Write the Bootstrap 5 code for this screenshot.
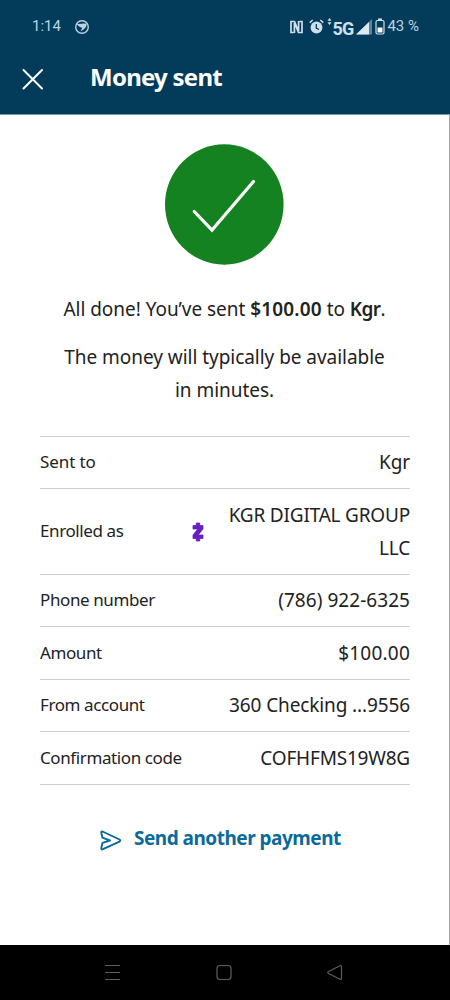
<!DOCTYPE html>
<html lang="en">
<head>
<meta charset="utf-8">
<meta name="viewport" content="width=device-width, initial-scale=1">
<title>Money sent</title>
<link href="https://cdn.jsdelivr.net/npm/bootstrap@5.3.0/dist/css/bootstrap.min.css" rel="stylesheet">
<style>
body{font-family:"Noto Sans","Open Sans",sans-serif;color:#222;background:#fff;font-size:19px}
.screen{height:1000px}
.topbar{height:115px;background:#033c5a;border-bottom:1px solid #7d97a5}
.status{height:53px;font:15px/53px Roboto,sans-serif;color:#b9d3e2;padding-left:32px;padding-right:31px}
.brand-dot{margin-left:13px}
.net{font-size:18px;font-weight:700;letter-spacing:-.8px;color:#cfe0ea;padding-top:3px}
.arrows{margin:-9px 0 0 3px}
.alarm{margin-left:6px}
.page{border-right:1px solid #a5a5a5}
.title-row{height:50px;padding-left:22px}
.title-row h1{font-size:24px;font-weight:700;line-height:48px;letter-spacing:-.75px;margin:0 0 0 46px}
.close-x{margin-top:15px}
.done{margin-top:29px;height:121px}
.msg{line-height:33px;letter-spacing:-.04px}
.msg b{letter-spacing:.15px;font-weight:600}
.msg .who{letter-spacing:-.6px}
.details{margin:29.4px 39px 0 40px;border-top:1px solid #cfcfcf}
.detail{border-bottom:1px solid #cfcfcf;padding:9.2px 0 9.3px}
.detail dt{font-weight:400;font-size:17px;line-height:32px;padding-bottom:1px;letter-spacing:-.4px}
.detail:first-child dt{letter-spacing:-.1px}
.detail dd{margin:0;line-height:33px;text-align:right;letter-spacing:-.12px}
.detail .caps{letter-spacing:-.2px}
.detail .money{letter-spacing:.22px}
.detail .phone{letter-spacing:.05px}
.zmark{margin-right:25px}
.again{color:#0b6a9b;font-weight:700;text-decoration:none;line-height:33px;margin:36.6px 0 0 99px;letter-spacing:-.5px}
.navkeys{height:55px;background:#000}
</style>
<script src="https://cdn.jsdelivr.net/npm/bootstrap@5.3.0/dist/js/bootstrap.bundle.min.js"></script>
</head>
<body>
<div class="screen d-flex flex-column overflow-hidden">
<header class="topbar flex-shrink-0 text-white">
  <div class="status d-flex align-items-center">
    <span>1:14</span>
    <svg class="brand-dot" width="16" height="16" viewBox="0 0 16 16"><circle cx="8" cy="8" r="6.300" fill="none" stroke="#b9d3e2" stroke-width="1.400"/><path d="M2.500 4.600C6 5.600 8 4 12.600 4.800 13 8.500 9.500 10.500 6.500 12.600L8.200 8.800C5.800 8.400 3.500 7 2.500 4.600Z" fill="#b9d3e2"/></svg>
    <svg class="ms-auto" width="13" height="14" viewBox="0 0 13 14"><path d="M3.500 12.500H1V1.500H4.500L8 10M9.500 1.500H12V12.500H8.500L5 4M4.400 3V12.900M8.600 1.100V11" fill="none" stroke="#cfe0ea" stroke-width="1.700"/></svg>
    <svg class="alarm" width="15" height="15" viewBox="0 0 15 15"><circle cx="7.500" cy="8.500" r="5.900" fill="#cfe0ea"/><path d="M.7 3.600 3.700 1M14.300 3.600 11.300 1" stroke="#cfe0ea" stroke-width="1.500"/><path d="M7.300 5V9L10 10.500" fill="none" stroke="#033c5a" stroke-width="1.300"/></svg>
    <svg class="arrows" width="5" height="8" viewBox="0 0 5 8"><path d="M2.500 0 4.500 2.700H.5ZM2.500 7 .5 4.300H4.500Z" fill="#cfe0ea"/></svg>
    <span class="net">5G</span>
    <svg style="margin-left:3px" width="17" height="17" viewBox="0 0 17 17"><path d="M0 16.500 16 1V16.500Z" fill="#5d8299"/><path d="M0 16.500 13 4V16.500Z" fill="#dce9f0"/></svg>
    <svg style="margin-left:2px" width="10" height="17" viewBox="0 0 10 17"><path d="M3 1.200H7" stroke="#cfe0ea" stroke-width="1.500"/><rect x="1" y="2.500" width="8" height="13.500" rx="1.500" fill="none" stroke="#cfe0ea" stroke-width="1.200"/><path d="M2.500 9.500H7.500V14.500H2.500Z" fill="#fff"/></svg>
    <span style="margin-left:2px">43 %</span>
  </div>
  <div class="title-row d-flex">
    <svg class="close-x" width="22" height="22" viewBox="0 0 22 22"><path d="M1.500 2 20 20.500M20 2 1.500 20.500" stroke="#fff" stroke-width="2" stroke-linecap="round"/></svg>
    <h1>Money sent</h1>
  </div>
</header>
<main class="page flex-grow-1">
  <svg class="done d-block mx-auto" width="121" height="121" viewBox="0 0 121 121"><ellipse cx="60.300" cy="60.500" rx="59.300" ry="60.200" fill="#148220"/><path d="M30.200 67.500 48 86 89.500 37.500" fill="none" stroke="#fff" stroke-width="3.200" stroke-linecap="round" stroke-linejoin="miter"/></svg>
  <p class="msg text-center mb-0" style="margin-top:27.6px">All done! You’ve sent <b>$100.00</b> to <b class="who">Kgr</b>.</p>
  <p class="msg text-center mb-0" style="margin-top:15px">The money will typically be available<br>in minutes.</p>
  <dl class="details mb-0">
    <div class="detail d-flex justify-content-between align-items-center"><dt>Sent to</dt><dd>Kgr</dd></div>
    <div class="detail d-flex justify-content-between align-items-center"><dt>Enrolled as</dt><dd class="caps d-flex align-items-center"><svg class="zmark" width="12" height="20" viewBox="0 0 12 20"><path d="M1 3.500H4.300V1H7.700V3.500H11V7L6.200 13H11V16.500H7.700V19H4.300V16.500H1V13L5.800 7H1Z" fill="#6720bd" stroke="#6720bd" stroke-width=".8" stroke-linejoin="round"/></svg><span>KGR DIGITAL GROUP<br>LLC</span></dd></div>
    <div class="detail d-flex justify-content-between align-items-center"><dt>Phone number</dt><dd class="phone">(786) 922-6325</dd></div>
    <div class="detail d-flex justify-content-between align-items-center"><dt>Amount</dt><dd class="money">$100.00</dd></div>
    <div class="detail d-flex justify-content-between align-items-center"><dt>From account</dt><dd>360 Checking ...9556</dd></div>
    <div class="detail d-flex justify-content-between align-items-center"><dt>Confirmation code</dt><dd class="caps">COFHFMS19W8G</dd></div>
  </dl>
  <a href="#" class="again d-flex align-items-center">
    <svg width="24" height="22" viewBox="0 0 24 22" class="flex-shrink-0" style="margin-top:3px"><path d="M3.500 2.500Q2 2 2.300 3.800L3.500 8.700 11 11.500 3.500 13.800 2.300 19Q2 21 4 20.200L20.500 12.600Q22 11.500 20.500 10.500Z" fill="none" stroke="#0b6a9b" stroke-width="1.900" stroke-linejoin="round"/></svg>
    <span style="margin-left:11px;padding-top:1px">Send another payment</span>
  </a>
</main>
<footer class="navkeys flex-shrink-0">
  <svg class="d-block" width="450" height="55" viewBox="0 0 450 55" fill="none" stroke="#5e5e5e" stroke-width="1.200"><path d="M105 20.500H120M105 27.500H120M105 34.500H120"/><rect x="217" y="20.500" width="14" height="14" rx="3"/><path d="M328.500 26.500 340 20.800Q341.500 20.300 341.500 21.800V33.200Q341.500 34.700 340 34.200L328.500 28.500Q327 27.500 328.500 26.500Z"/></svg>
</footer>
</div>
</body>
</html>
